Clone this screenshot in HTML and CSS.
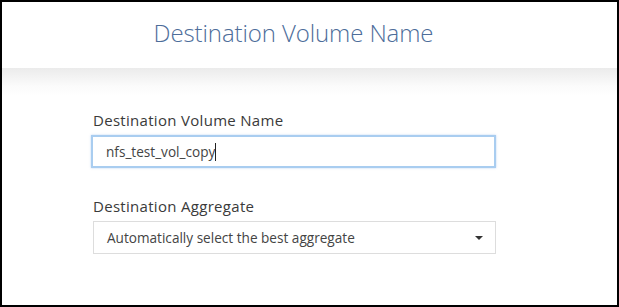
FILE: index.html
```html
<!DOCTYPE html>
<html lang="en">
<head>
  <meta charset="UTF-8" />
  <title>Destination Volume Name</title>
  <link rel="stylesheet" href="styles.css">
</head>
<body>

<div class="frame">
  <!-- HEADER -->
  <div class="header">
    <h1>Destination Volume Name</h1>
  </div>

  <!-- FORM -->
  <div class="content">
    <div class="field">
      <label for="vol-name">Destination Volume Name</label>
      <div class="text-input focused">
        <span id="vol-name">nfs_test_vol_copy</span><span class="caret-line"></span>
      </div>
    </div>

    <div class="field">
      <label>Destination Aggregate</label>
      <div class="select">
        <span>Automatically select the best aggregate</span>
        <span class="arrow"></span>
      </div>
    </div>
  </div>
</div>

</body>
</html>
```

FILE: styles.css
```css
body, html {
  margin: 0;
  padding: 0;
  font-family: 'Open Sans', 'Liberation Sans', sans-serif;
  background: #fff;
}

.frame {
  width: 619px;
  height: 307px;
  box-sizing: border-box;
  border: 2px solid #000;
  display: flex;
  flex-direction: column;
  overflow: hidden;
}

.header {
  height: 66px;
  flex-shrink: 0;
  background: #fff;
  display: flex;
  align-items: center;
  justify-content: center;
  padding: 0 32px 5px 0;
  box-sizing: border-box;
}

.header h1 {
  margin: 0;
  font-size: 24px;
  font-weight: 300;
  letter-spacing: -0.1px;
  color: #4d6d9a;
}

.content {
  flex: 1;
  background: linear-gradient(#ebebeb, #fbfbfb 18px, #fff 28px);
  padding: 42px 0 0 89px;
}

.field {
  width: 405px;
  margin-bottom: 28px;
}

.field label {
  display: block;
  font-size: 15px;
  letter-spacing: 0.3px;
  line-height: 20px;
  color: #3a3a3a;
  margin-bottom: 5px;
  padding-left: 2px;
}

.text-input,
.select {
  box-sizing: border-box;
  height: 33px;
  display: flex;
  align-items: center;
  padding: 0 13px;
  font-size: 13.6px;
  color: #444;
  background: #fff;
  border: 1px solid #ddd;
}

.text-input.focused {
  border: 2px solid #a9cdf0;
  padding: 0 13px;
  box-shadow: 0 0 2px rgba(120, 170, 230, 0.5);
}

.caret-line {
  width: 1px;
  height: 18px;
  background: #222;
}

.select {
  justify-content: space-between;
  margin-left: 2px;
  width: 403px;
  padding-right: 12px;
}

.arrow {
  width: 0;
  height: 0;
  border-left: 4px solid transparent;
  border-right: 4px solid transparent;
  border-top: 4px solid #333;
}
```
